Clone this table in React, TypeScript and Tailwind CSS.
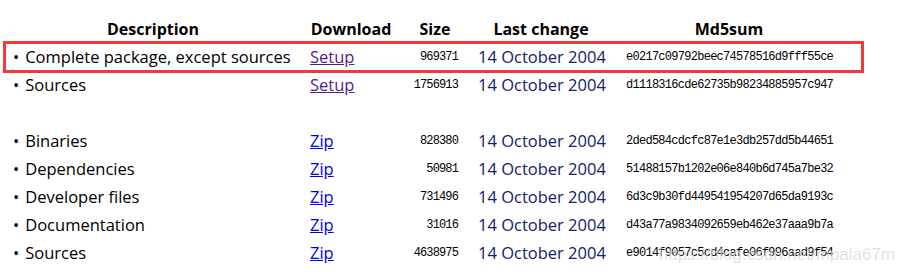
import React from 'react';

type Row = {
  desc: string;
  link: string;
  visited?: boolean;
  size: string;
  date: string;
  md5: string;
};

const rows: (Row | null)[] = [
  { desc: 'Complete package, except sources', link: 'Setup', visited: true, size: '969371', date: '14 October 2004', md5: 'e0217c09792beec74578516d9fff55ce' },
  { desc: 'Sources', link: 'Setup', visited: true, size: '1756913', date: '14 October 2004', md5: 'd1118316cde62735b98234885957c947' },
  null,
  { desc: 'Binaries', link: 'Zip', size: '828380', date: '14 October 2004', md5: '2ded584cdcfc87e1e3db257dd5b44651' },
  { desc: 'Dependencies', link: 'Zip', size: '50981', date: '14 October 2004', md5: '51488157b1202e06e840b6d745a7be32' },
  { desc: 'Developer files', link: 'Zip', size: '731496', date: '14 October 2004', md5: '6d3c9b30fd449541954207d65da9193c' },
  { desc: 'Documentation', link: 'Zip', size: '31016', date: '14 October 2004', md5: 'd43a77a9834092659eb462e37aaa9b7a' },
  { desc: 'Sources', link: 'Zip', size: '4638975', date: '14 October 2004', md5: 'e9014f9057c5cd4cafe06f996aad9f54' },
];

const grid = 'grid grid-cols-[298px_98px_70px_142px_234px] h-[28px] items-center';

export default function App() {
  return (
    <div className="relative w-[905px] h-[272px] bg-white overflow-hidden text-black font-['Open_Sans','Noto_Sans',sans-serif]">
      <div className="pt-[15px] pl-[4px]">
        {/* header */}
        <div className={`${grid} text-[16px] font-bold`}>
          <div className="text-center">Description</div>
          <div className="text-center">Download</div>
          <div className="text-center">Size</div>
          <div className="text-center">Last change</div>
          <div className="text-center">Md5sum</div>
        </div>

        {rows.map((r, i) =>
          r === null ? (
            <div key={i} className="h-[28px]" />
          ) : (
            <div key={i} className={`${grid} text-[16.5px]`}>
              <div className="pl-[9px] whitespace-nowrap">
                <span className="mr-[6px]">•</span>
                {r.desc}
              </div>
              <div className="pl-[8px]">
                <a
                  href="#"
                  className={`underline ${r.visited ? 'text-[#551a8b]' : 'text-[#0000ee]'}`}
                >
                  {r.link}
                </a>
              </div>
              <div className="text-right pr-[12px] font-['Liberation_Mono',monospace] text-[12px] tracking-[-0.87px]">
                {r.size}
              </div>
              <div className="pl-[8px] text-[#14206a] whitespace-nowrap">{r.date}</div>
              <div className="pl-[14px] font-['Liberation_Mono',monospace] text-[12px] tracking-[-0.73px] whitespace-nowrap">
                {r.md5}
              </div>
            </div>
          )
        )}
      </div>

      {/* annotation box */}
      <div className="absolute left-[3px] top-[41px] w-[861px] h-[32px] border-[3px] border-[#f03a3a]" />

      {/* watermark */}
      <div className="absolute right-[10px] top-[242px] text-[17px] text-[#d8d8d8]/75 font-['Liberation_Sans',sans-serif] whitespace-nowrap">
        https://blog.csdn.net/mpala67m
      </div>
    </div>
  );
}
